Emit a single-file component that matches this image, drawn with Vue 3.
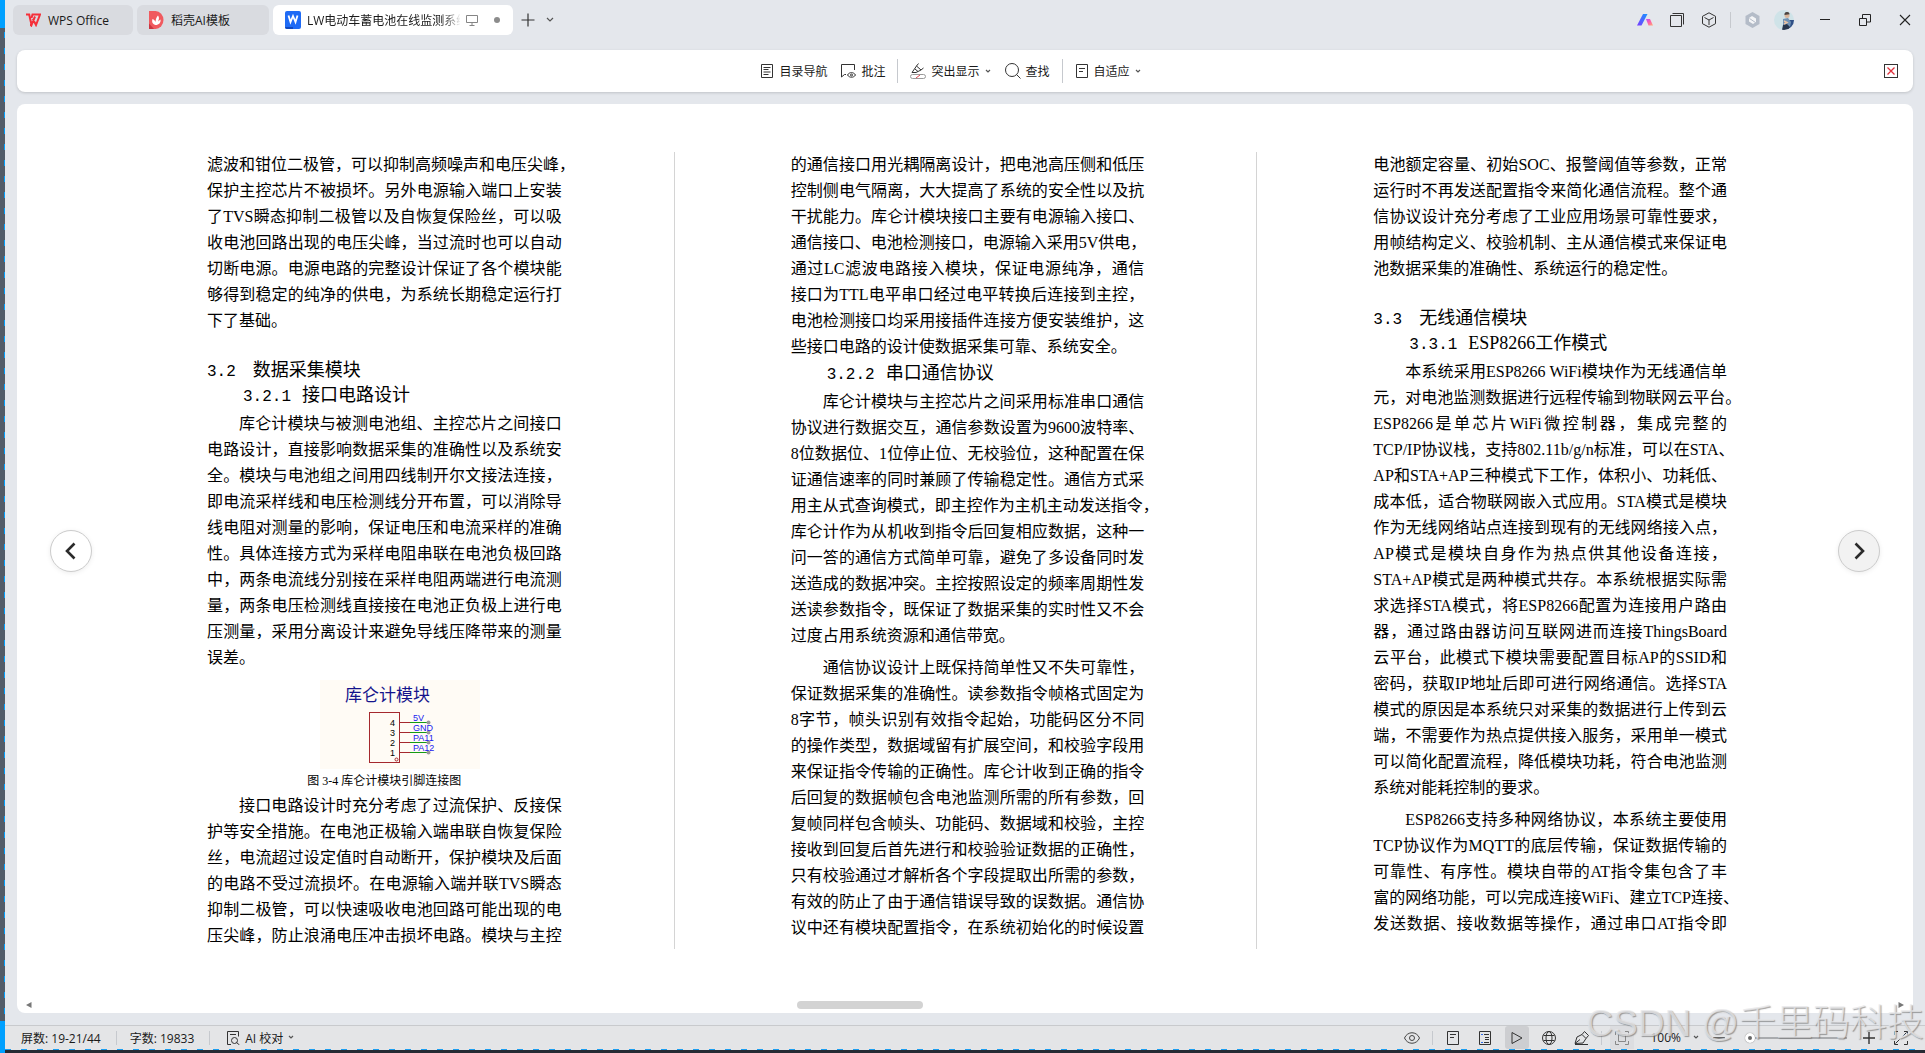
<template>
  <div class="desktop">
    <div class="edge"></div>
    <div class="window">
      <header class="titlebar">
        <nav class="tabs">
          <button class="tab tab-home">
            <svg width="16" height="14" viewBox="0 0 16 14" fill="none" stroke="#f5303a" stroke-width="2">
              <path d="M1 1.500h3.200L6.500 12 10 3.500M6.500 5l1-3.500H15L11 12 7.800 6M5 12h2M10.500 12h1.500" />
            </svg>
            <span>WPS Office</span>
          </button>
          <button class="tab tab-docer">
            <svg width="15" height="18" viewBox="0 0 15 18">
              <path d="M0 0h6.500a8 9 0 0 1 0 18H0z" fill="#f05a5f" />
              <path d="M0 12.500L5 18H0z" fill="#c93640" />
              <path d="M6.500 14C2.500 13 3 9.500 3.500 8c1.500.500 2.500 1.500 3 3 .200-3 1-5 2.500-6.500 1.500 2 1 4 0 6l2.500-2c.500 3-1.500 5.500-5 5.500z" fill="#fff" />
            </svg>
            <span>稻壳AI模板</span>
          </button>
          <button class="tab tab-doc">
            <svg width="16" height="18" viewBox="0 0 16 18">
              <rect width="16" height="18" rx="2" fill="#1f6bf5" />
              <path d="M0 16h8v2H2a2 2 0 0 1-2-2z" fill="#1148bd" />
              <path d="M3.500 4.500l2 6.500L8 5l2.500 6 2-6.500" fill="none" stroke="#fff" stroke-width="1.800" />
            </svg>
            <span class="tab-title">LW电动车蓄电池在线监测系统</span>
            <svg width="12" height="12" viewBox="0 0 12 12" fill="none" stroke="#858585">
              <path d="M.500 1.500h11v7H.500zM3.500 11.500h5M6 8.500v3" />
            </svg>
            <i class="unsaved"></i>
          </button>
          <button class="icon-btn" aria-label="新建">
            <svg width="14" height="14" viewBox="0 0 14 14" stroke="#333" stroke-width="1.200"><path d="M7 .500v13M.500 7h13" /></svg>
          </button>
          <button class="icon-btn list" aria-label="标签列表">
            <svg class="chev" width="8" height="6" viewBox="0 0 8 6"><path d="M1 1l3 3 3-3" /></svg>
          </button>
        </nav>
        <div class="window-tools">
          <button class="icon-btn w32" aria-label="WPS AI">
            <svg width="16" height="12" viewBox="0 0 16 12">
              <defs>
                <linearGradient id="aiLeft" x1="0" y1="1" x2="1" y2="0">
                  <stop offset="0" stop-color="#7a3cff" />
                  <stop offset="1" stop-color="#1894ff" />
                </linearGradient>
                <linearGradient id="aiRight" x1="0" y1="0" x2="1" y2="1">
                  <stop offset="0" stop-color="#b74bff" />
                  <stop offset=".500" stop-color="#ff5fa8" />
                  <stop offset="1" stop-color="#ffb070" />
                </linearGradient>
              </defs>
              <path d="M6 0h4.500L4.500 11.500H0z" fill="url(#aiLeft)" />
              <path d="M9 5h4l3 6.500h-4.500z" fill="url(#aiRight)" />
            </svg>
          </button>
          <button class="icon-btn w32" aria-label="工作区">
            <svg width="14" height="14" viewBox="0 0 14 14" fill="none" stroke="#333"><path d="M.500 2.500h11v11H.500zM2.500.500h11v11" /></svg>
          </button>
          <button class="icon-btn w32" aria-label="应用">
            <svg width="16" height="16" viewBox="0 0 16 16" fill="none" stroke="#333">
              <path d="M8 .800l6.500 3.500v7.400L8 15.200l-6.500-3.500V4.300zM3.500 5.500L8 8l4.500-2.500M8 8v5" />
            </svg>
          </button>
          <span class="vline"></span>
          <button class="icon-btn w32" aria-label="会员">
            <svg width="15" height="16" viewBox="0 0 15 16">
              <path d="M7.500 0L14.500 4v8l-7 4-7-4V4z" fill="#b4bcc8" />
              <path d="M4 6l3-2 4 2.500V10l-3 2-4-2.500z" fill="#f4f5f7" />
              <path d="M4.500 6.500l6 4" stroke="#b4bcc8" />
            </svg>
          </button>
          <button class="icon-btn w32" aria-label="账户">
            <svg width="20" height="20" viewBox="0 0 20 20">
              <defs><clipPath id="face"><circle cx="10" cy="10" r="10" /></clipPath></defs>
              <g clip-path="url(#face)">
                <rect width="20" height="20" fill="#cfe3e8" />
                <path d="M15 10h5v10h-6z" fill="#2f4f86" />
                <path d="M9 9l5-1 3 4-1 5-7 1z" fill="#6f93b5" />
                <path d="M8 20l1-5 4-1 3 3-2 3z" fill="#27374d" />
                <circle cx="13" cy="5.500" r="2.500" fill="#d9b79c" />
                <path d="M10.500 5a2.600 2.600 0 0 1 5.200-.800z" fill="#4b4440" />
                <path d="M10 11l3 1.500-3 1.500" fill="none" stroke="#e8c3a4" stroke-width="1.500" />
              </g>
            </svg>
          </button>
          <button class="icon-btn w40 min" aria-label="最小化">
            <svg width="10" height="2" viewBox="0 0 10 2"><path d="M0 .500h10" stroke="#222" /></svg>
          </button>
          <button class="icon-btn w40" aria-label="还原">
            <svg width="12" height="12" viewBox="0 0 12 12" fill="none" stroke="#222"><path d="M.500 4.500h7v7h-7zM3.500 4V.500h8v7.500H8" /></svg>
          </button>
          <button class="icon-btn w40" aria-label="关闭">
            <svg width="12" height="12" viewBox="0 0 12 12" stroke="#222" stroke-width="1.100"><path d="M1 1l10 10M11 1L1 11" /></svg>
          </button>
        </div>
      </header>

      <div class="toolbar">
        <div class="tools">
          <button class="tool">
            <svg width="14" height="14" viewBox="0 0 14 14" fill="none" stroke="#333"><path d="M1.500.500h11v13h-11zM3.500 3.500h7M3.500 5.500h5M3.500 8h7M3.500 10.500h5" /></svg>
            <span>目录导航</span>
          </button>
          <button class="tool">
            <svg width="15" height="14" viewBox="0 0 15 14" fill="none" stroke="#333">
              <path d="M5 10.500H3.500L.500 13V.500h13V6M6.500 11c1.800-3.200 6.200-3.200 8 0-1.800 3-6.200 3-8 0z" />
              <circle cx="10.500" cy="11" r="1" />
            </svg>
            <span>批注</span>
          </button>
          <span class="vline"></span>
          <button class="tool">
            <svg width="16" height="16" viewBox="0 0 16 16" fill="none" stroke="#333">
              <path d="M2 9.500L6.500 3l4.500 4-5 2.500zM6.500 3L8.500.500M11 7l2.500-2M5 6l3 2.500" />
              <rect x=".500" y="11.500" width="15" height="4" rx="2" stroke="#999" />
              <path d="M6 15l4-3" stroke="#e0444e" />
            </svg>
            <span>突出显示</span>
            <svg class="chev" width="6" height="5" viewBox="0 0 6 5"><path d="M1 1l2 2 2-2" /></svg>
          </button>
          <button class="tool">
            <svg width="16" height="16" viewBox="0 0 16 16" fill="none" stroke="#333"><circle cx="7" cy="7" r="6.500" /><path d="M11.500 11.500L15.500 15.500" /></svg>
            <span>查找</span>
          </button>
          <span class="vline"></span>
          <button class="tool">
            <svg width="14" height="14" viewBox="0 0 14 14" fill="none" stroke="#333"><path d="M1.500.500h11v13h-11zM4 4.500h6M4 7.500h4" /></svg>
            <span>自适应</span>
            <svg class="chev" width="6" height="5" viewBox="0 0 6 5"><path d="M1 1l2 2 2-2" /></svg>
          </button>
        </div>
        <button class="icon-btn exit" aria-label="退出阅读">
          <svg width="14" height="14" viewBox="0 0 14 14" fill="none"><rect x=".500" y=".500" width="13" height="13" stroke="#333" /><path d="M3.500 3.500l7 7M10.500 3.500l-7 7" stroke="#e0303c" stroke-width="1.300" /></svg>
        </button>
      </div>

      <main class="reader">
        <div class="pages">
          <article v-for="(page, p) in pages" :key="p" class="page">
            <template v-for="(block, b) in page" :key="b">
              <h2 v-if="block.type === 'h2'"><span class="num">{{ block.num }}</span>{{ block.text }}</h2>
              <h3 v-else-if="block.type === 'h3'"><span class="num">{{ block.num }}</span>{{ block.text }}</h3>
              <figure v-else-if="block.type === 'figure'">
                <svg class="schematic" width="160" height="89" viewBox="0 0 160 89">
                  <rect width="160" height="89" fill="#fffbf5" />
                  <text class="sch-title" x="25" y="21">库仑计模块</text>
                  <rect x="49.500" y="32.500" width="30" height="50" fill="none" stroke="#a5282e" />
                  <circle cx="76.500" cy="79.500" r="1.500" fill="none" stroke="#a5282e" />
                  <g v-for="(pin, i) in pins" :key="pin">
                    <path :d="`M80 ${42.5 + i * 10}h10`" stroke="#a5282e" />
                    <path :d="`M90 ${42.5 + i * 10}h19`" stroke="#159a15" />
                    <circle cx="108.500" :cy="42.5 + i * 10" r="2" fill="#999" />
                    <text class="sch-no" x="70" :y="46 + i * 10">{{ 4 - i }}</text>
                    <text class="sch-pin" x="93" :y="41 + i * 10">{{ pin }}</text>
                  </g>
                </svg>
                <figcaption>{{ block.text }}</figcaption>
              </figure>
              <p v-else :class="{ cont: block.cont, open: block.open }">
                <span v-for="(line, l) in block.lines" :key="l" class="line">{{ line }}</span>
              </p>
            </template>
          </article>
        </div>
        <button class="turn prev" aria-label="上一页">
          <svg width="12" height="18" viewBox="0 0 12 18"><path d="M9.500 1.500L2 9l7.500 7.500" /></svg>
        </button>
        <button class="turn next" aria-label="下一页">
          <svg width="12" height="18" viewBox="0 0 12 18"><path d="M2.500 1.500L10 9l-7.500 7.500" /></svg>
        </button>
        <div class="hscroll">
          <svg width="6" height="6" viewBox="0 0 6 6"><path d="M5.500 0v6L0 3z" fill="#777" /></svg>
          <span class="thumb"></span>
          <svg width="6" height="6" viewBox="0 0 6 6"><path d="M.500 0v6L6 3z" fill="#777" /></svg>
        </div>
      </main>

      <footer class="status">
        <span class="stat">屏数: 19-21/44</span>
        <span class="vline"></span>
        <span class="stat">字数: 19833</span>
        <span class="vline"></span>
        <button class="tool proof">
          <svg width="14" height="14" viewBox="0 0 14 14" fill="none" stroke="#333">
            <path d="M5 13.500H1.500V.500h11v5M4 3.500h6" /><circle cx="8.500" cy="9.500" r="3" /><path d="M10.500 11.500l3 2.500" />
          </svg>
          <span>AI 校对</span>
          <svg class="chev" width="6" height="5" viewBox="0 0 6 5"><path d="M1 1l2 2 2-2" /></svg>
        </button>
        <div class="views">
          <button class="icon-btn w32" aria-label="护眼模式">
            <svg width="16" height="12" viewBox="0 0 16 12" fill="none" stroke="#444"><path d="M.500 6c3-7 12-7 15 0-3 7-12 7-15 0z" /><circle cx="8" cy="6" r="2.500" /></svg>
          </button>
          <span class="vline"></span>
          <button class="icon-btn w32" aria-label="页面视图">
            <svg width="14" height="14" viewBox="0 0 14 14" fill="none" stroke="#333"><path d="M1.500.500h11v13h-11zM4 3.500h6M4 6.500h4" /></svg>
          </button>
          <button class="icon-btn w32" aria-label="大纲视图">
            <svg width="14" height="14" viewBox="0 0 14 14" fill="none" stroke="#333"><path d="M1.500.500h11v13h-11zM6 3.500h5M7 6.500h4M7 8.500h4M6 11.500h5" /><path d="M3 3.500h2M3 11.500h2" stroke="#2f6bea" /></svg>
          </button>
          <button class="icon-btn active" aria-label="阅读视图">
            <svg width="12" height="14" viewBox="0 0 12 14" fill="none" stroke="#333"><path d="M1 1.500L11 7 1 12.500z" /></svg>
          </button>
          <button class="icon-btn w32" aria-label="Web视图">
            <svg width="14" height="14" viewBox="0 0 14 14" fill="none" stroke="#333"><circle cx="7" cy="7" r="6.500" /><ellipse cx="7" cy="7" rx="3" ry="6.500" /><path d="M1.500 4.500h11M1.500 9.500h11" /></svg>
          </button>
          <button class="icon-btn w32" aria-label="写作模式">
            <svg width="15" height="14" viewBox="0 0 15 14" fill="none" stroke="#333"><path d="M1 12.500L3 6l5-2.500 4 4L9 12zM8 3.500L10.500.500l4 4L12 7.500M1 12.500l5-4M1 13.500h13" /></svg>
          </button>
          <span class="vline"></span>
          <button class="icon-btn fit" aria-label="适合页面">
            <svg width="14" height="14" viewBox="0 0 14 14" fill="none" stroke="#888"><path d="M.500 4V.500H4M10 .500h3.500V4M13.500 10v3.500H10M4 13.500H.500V10M3.500 3.500h7v7h-7z" /></svg>
          </button>
          <button class="tool zoom-value">
            <span>100%</span>
            <svg class="chev" width="6" height="5" viewBox="0 0 6 5"><path d="M1 1l2 2 2-2" /></svg>
          </button>
          <button class="icon-btn w40" aria-label="缩小">
            <svg width="12" height="2" viewBox="0 0 12 2"><path d="M0 1h12" stroke="#666" stroke-width="2" /></svg>
          </button>
          <input v-model="zoom" class="slider" type="range" min="100" max="500" aria-label="缩放" />
          <button class="icon-btn w32" aria-label="放大">
            <svg width="12" height="12" viewBox="0 0 12 12"><path d="M6 0v12M0 6h12" stroke="#333" stroke-width="1.400" /></svg>
          </button>
          <button class="icon-btn w32" aria-label="全屏">
            <svg width="14" height="14" viewBox="0 0 14 14" fill="none" stroke="#333"><path d="M.500 4V.500H4M10 .500h3.500V4M13.500 10v3.500H10M4 13.500H.500V10M8.500 5.500l4-4M5.500 8.500l-4 4" /></svg>
          </button>
        </div>
      </footer>
      <div class="taskline"></div>
    </div>
    <div class="watermark">CSDN @千里码科技</div>
  </div>
</template>

<script setup>
import { ref } from 'vue'

const zoom = ref(100)
const pins = ['5V', 'GND', 'PA11', 'PA12']

// cont: continues from the previous page, open: runs on to the next page
const pages = [
  [
    {
      type: 'p',
      cont: true,
      lines: [
        '滤波和钳位二极管，可以抑制高频噪声和电压尖峰，',
        '保护主控芯片不被损坏。另外电源输入端口上安装',
        '了TVS瞬态抑制二极管以及自恢复保险丝，可以吸',
        '收电池回路出现的电压尖峰，当过流时也可以自动',
        '切断电源。电源电路的完整设计保证了各个模块能',
        '够得到稳定的纯净的供电，为系统长期稳定运行打',
        '下了基础。'
      ]
    },
    { type: 'h2', num: '3.2', text: '数据采集模块' },
    { type: 'h3', num: '3.2.1', text: '接口电路设计' },
    {
      type: 'p',
      lines: [
        '库仑计模块与被测电池组、主控芯片之间接口',
        '电路设计，直接影响数据采集的准确性以及系统安',
        '全。模块与电池组之间用四线制开尔文接法连接，',
        '即电流采样线和电压检测线分开布置，可以消除导',
        '线电阻对测量的影响，保证电压和电流采样的准确',
        '性。具体连接方式为采样电阻串联在电池负极回路',
        '中，两条电流线分别接在采样电阻两端进行电流测',
        '量，两条电压检测线直接接在电池正负极上进行电',
        '压测量，采用分离设计来避免导线压降带来的测量',
        '误差。'
      ]
    },
    { type: 'figure', text: '图 3-4 库仑计模块引脚连接图' },
    {
      type: 'p',
      open: true,
      lines: [
        '接口电路设计时充分考虑了过流保护、反接保',
        '护等安全措施。在电池正极输入端串联自恢复保险',
        '丝，电流超过设定值时自动断开，保护模块及后面',
        '的电路不受过流损坏。在电源输入端并联TVS瞬态',
        '抑制二极管，可以快速吸收电池回路可能出现的电',
        '压尖峰，防止浪涌电压冲击损坏电路。模块与主控'
      ]
    }
  ],
  [
    {
      type: 'p',
      cont: true,
      lines: [
        '的通信接口用光耦隔离设计，把电池高压侧和低压',
        '控制侧电气隔离，大大提高了系统的安全性以及抗',
        '干扰能力。库仑计模块接口主要有电源输入接口、',
        '通信接口、电池检测接口，电源输入采用5V供电，',
        '通过LC滤波电路接入模块，保证电源纯净，通信',
        '接口为TTL电平串口经过电平转换后连接到主控，',
        '电池检测接口均采用接插件连接方便安装维护，这',
        '些接口电路的设计使数据采集可靠、系统安全。'
      ]
    },
    { type: 'h3', num: '3.2.2', text: '串口通信协议' },
    {
      type: 'p',
      lines: [
        '库仑计模块与主控芯片之间采用标准串口通信',
        '协议进行数据交互，通信参数设置为9600波特率、',
        '8位数据位、1位停止位、无校验位，这种配置在保',
        '证通信速率的同时兼顾了传输稳定性。通信方式采',
        '用主从式查询模式，即主控作为主机主动发送指令，',
        '库仑计作为从机收到指令后回复相应数据，这种一',
        '问一答的通信方式简单可靠，避免了多设备同时发',
        '送造成的数据冲突。主控按照设定的频率周期性发',
        '送读参数指令，既保证了数据采集的实时性又不会',
        '过度占用系统资源和通信带宽。'
      ]
    },
    {
      type: 'p',
      open: true,
      lines: [
        '通信协议设计上既保持简单性又不失可靠性，',
        '保证数据采集的准确性。读参数指令帧格式固定为',
        '8字节，帧头识别有效指令起始，功能码区分不同',
        '的操作类型，数据域留有扩展空间，和校验字段用',
        '来保证指令传输的正确性。库仑计收到正确的指令',
        '后回复的数据帧包含电池监测所需的所有参数，回',
        '复帧同样包含帧头、功能码、数据域和校验，主控',
        '接收到回复后首先进行和校验验证数据的正确性，',
        '只有校验通过才解析各个字段提取出所需的参数，',
        '有效的防止了由于通信错误导致的误数据。通信协',
        '议中还有模块配置指令，在系统初始化的时候设置'
      ]
    }
  ],
  [
    {
      type: 'p',
      cont: true,
      lines: [
        '电池额定容量、初始SOC、报警阈值等参数，正常',
        '运行时不再发送配置指令来简化通信流程。整个通',
        '信协议设计充分考虑了工业应用场景可靠性要求，',
        '用帧结构定义、校验机制、主从通信模式来保证电',
        '池数据采集的准确性、系统运行的稳定性。'
      ]
    },
    { type: 'h2', num: '3.3', text: '无线通信模块' },
    { type: 'h3', num: '3.3.1', text: 'ESP8266工作模式' },
    {
      type: 'p',
      lines: [
        '本系统采用ESP8266 WiFi模块作为无线通信单',
        '元，对电池监测数据进行远程传输到物联网云平台。',
        'ESP8266是单芯片WiFi微控制器，集成完整的',
        'TCP/IP协议栈，支持802.11b/g/n标准，可以在STA、',
        'AP和STA+AP三种模式下工作，体积小、功耗低、',
        '成本低，适合物联网嵌入式应用。STA模式是模块',
        '作为无线网络站点连接到现有的无线网络接入点，',
        'AP模式是模块自身作为热点供其他设备连接，',
        'STA+AP模式是两种模式共存。本系统根据实际需',
        '求选择STA模式，将ESP8266配置为连接用户路由',
        '器，通过路由器访问互联网进而连接ThingsBoard',
        '云平台，此模式下模块需要配置目标AP的SSID和',
        '密码，获取IP地址后即可进行网络通信。选择STA',
        '模式的原因是本系统只对采集的数据进行上传到云',
        '端，不需要作为热点提供接入服务，采用单一模式',
        '可以简化配置流程，降低模块功耗，符合电池监测',
        '系统对能耗控制的要求。'
      ]
    },
    {
      type: 'p',
      open: true,
      lines: [
        'ESP8266支持多种网络协议，本系统主要使用',
        'TCP协议作为MQTT的底层传输，保证数据传输的',
        '可靠性、有序性。模块自带的AT指令集包含了丰',
        '富的网络功能，可以完成连接WiFi、建立TCP连接、',
        '发送数据、接收数据等操作，通过串口AT指令即'
      ]
    }
  ]
]
</script>

<style>
body {
  margin: 0;
}
</style>

<style scoped>
.desktop {
  position: relative;
  display: flex;
  min-height: 100vh;
  overflow: hidden;
  background: #e4e7ec;
  color: #1a1a1a;
  font-family: "Open Sans", "Noto Sans CJK SC", sans-serif;
  font-size: 12px;
}

.desktop * {
  box-sizing: border-box;
}

svg {
  flex: none;
}

button {
  display: flex;
  align-items: center;
  padding: 0;
  border: none;
  background: none;
  color: inherit;
  font: inherit;
  white-space: nowrap;
  cursor: pointer;
}

.edge {
  flex: none;
  width: 5px;
  background:
    linear-gradient(#00a0ff, #00a0ff) 0 0 / 5px 28px no-repeat,
    linear-gradient(#00a0ff, #00a0ff) 0 100% / 5px 32px no-repeat,
    repeating-linear-gradient(#00a0ff 0 6px, #525c69 6px 16px) 100% 0 / 1px 100% no-repeat,
    #525c69;
}

.window {
  display: flex;
  flex: 1;
  flex-direction: column;
  min-width: 0;
}

.titlebar {
  display: flex;
  justify-content: space-between;
  height: 50px;
  padding: 5px 0 15px 8px;
}

.tabs,
.window-tools {
  display: flex;
  align-items: center;
  gap: 4px;
}

.window-tools {
  gap: 0;
}

.tab {
  gap: 7px;
  height: 30px;
  padding: 0 12px;
  border-radius: 6px;
  background: #d9dbe0;
}

.tab-home {
  width: 120px;
}

.tab-docer {
  width: 132px;
}

.tab-doc {
  gap: 6px;
  width: 240px;
  background: #fff;
}

.tab-title {
  width: 153px;
  overflow: hidden;
  text-align: left;
  mask-image: linear-gradient(90deg, #000 136px, transparent 154px);
}

.unsaved {
  width: 6px;
  height: 6px;
  margin-left: 10px;
  border-radius: 50%;
  background: #8c8c8c;
}

.icon-btn {
  justify-content: center;
  height: 24px;
}

.tabs .icon-btn {
  width: 22px;
}

.tabs .list {
  width: 14px;
}

.w32 {
  width: 32px;
}

.w40 {
  width: 40px;
}

.min {
  margin-left: 5px;
}

.chev {
  fill: none;
  stroke: #555;
  stroke-width: 1.2;
}

.vline {
  flex: none;
  width: 1px;
  height: 16px;
  margin: 0 5px;
  background: #c6c9ce;
}

.toolbar {
  display: flex;
  align-items: center;
  flex: none;
  height: 42px;
  margin: 0 12px 12px;
  padding-right: 15px;
  border-radius: 8px;
  background: #fff;
  box-shadow: 0 1px 3px rgba(0, 0, 0, 0.16);
}

.tools {
  display: flex;
  align-items: center;
  justify-content: center;
  flex: 1;
  gap: 14px;
}

.tools .vline {
  height: 24px;
  margin: 0 -2px;
}

.tool {
  gap: 5px;
}

.reader {
  position: relative;
  display: flex;
  flex-direction: column;
  flex: 1;
  margin: 0 12px 12px;
  border-radius: 8px;
  background: #fff;
}

.pages {
  display: grid;
  grid-template-columns: repeat(3, minmax(0, 1fr));
  align-items: start;
  flex: 1;
  padding: 48px 74px 0;
  color: #000;
  font-family: "Liberation Serif", "Noto Sans CJK SC", serif;
  font-size: 16px;
}

.page {
  min-height: 797px;
  padding: 0 112px 0 116px;
}

.page + .page {
  border-left: 1px solid #d4d4d4;
}

p {
  margin: 0;
}

p + p {
  margin-top: 6px;
}

.line {
  display: block;
  line-height: 26px;
  white-space: nowrap;
  text-align: justify;
  text-align-last: justify;
  text-spacing-trim: space-all;
}

p:not(.cont) .line:first-child {
  padding-left: 32px;
}

p:not(.open) .line:last-child {
  text-align-last: left;
}

h2,
h3 {
  margin: 24px 0 0;
  font-size: 18px;
  font-weight: 400;
  line-height: 24px;
  white-space: nowrap;
}

h3 {
  margin: 1px 0 4px;
  padding-left: 36px;
}

.num {
  margin-right: 17px;
  font-family: "Liberation Mono", monospace;
  font-size: 16px;
  line-height: 1;
}

h3 .num {
  margin-right: 11px;
}

figure {
  margin: 9px 0 0;
  text-align: center;
}

.schematic {
  display: block;
  margin: 0 auto;
  padding-left: 32px;
  box-sizing: content-box;
}

.sch-title {
  fill: #14148c;
  font-family: "Noto Sans CJK SC", sans-serif;
  font-size: 17px;
}

.sch-no,
.sch-pin {
  font-family: "Liberation Sans", sans-serif;
  font-size: 9px;
}

.sch-pin {
  fill: #2020f0;
}

figcaption {
  font-size: 12px;
  line-height: 24px;
}

.turn {
  position: absolute;
  top: calc(50% - 8px);
  justify-content: center;
  width: 42px;
  height: 42px;
  border: 1px solid #ccc;
  border-radius: 50%;
  background: #fff;
  box-shadow: 0 1px 5px rgba(0, 0, 0, 0.08);
  transform: translateY(-50%);
}

.turn path {
  fill: none;
  stroke: #2b2b2b;
  stroke-width: 2.6;
}

.prev {
  left: 33px;
}

.next {
  right: 33px;
  background: #f2f2f2;
}

.hscroll {
  display: flex;
  align-items: center;
  justify-content: space-between;
  height: 16px;
  padding: 0 9px;
}

.thumb {
  width: 126px;
  height: 8px;
  margin-right: 210px;
  border-radius: 4px;
  background: #d3d3d3;
}

.status {
  display: flex;
  align-items: center;
  flex: none;
  height: 24px;
  padding: 0 8px 0 16px;
  border-top: 1px solid #c8cacd;
  background: #e4e5e7;
}

.status .vline {
  height: 14px;
  margin: 0 13px 0 15px;
}

.stat {
  white-space: nowrap;
}

.proof {
  margin-left: 3px;
}

.views {
  display: flex;
  align-items: center;
  margin-left: auto;
}

.views .vline {
  margin: 0 4px;
}

.status .icon-btn {
  height: 23px;
}

.active {
  width: 24px;
  margin: 0 4px;
  border-radius: 3px;
  background: #cdced1;
}

.fit {
  width: 24px;
  margin: 0 4px;
  background: #dcdde0;
}

.zoom-value {
  gap: 12px;
  padding-left: 12px;
}

.slider {
  width: 102px;
  height: 10px;
  margin: 0 6px;
  background: transparent;
  appearance: none;
}

.slider::-webkit-slider-runnable-track {
  height: 2px;
  background: #a9abae;
}

.slider::-webkit-slider-thumb {
  width: 10px;
  height: 10px;
  margin-top: -4px;
  border: 3px solid #fff;
  border-radius: 50%;
  background: #666;
  box-shadow: 0 0 1px #666;
  appearance: none;
}

.taskline {
  flex: none;
  height: 4px;
  background:
    repeating-linear-gradient(90deg, #1a9df0 0 6px, #e4e5e7 6px 16px) 0 0 / 100% 1px no-repeat,
    #262a33;
}

.watermark {
  position: absolute;
  right: 1px;
  bottom: 2px;
  color: rgba(232, 232, 234, 0.75);
  font-family: "Liberation Sans", "Noto Sans CJK SC", sans-serif;
  font-size: 37px;
  font-weight: 300;
  line-height: 54px;
  white-space: nowrap;
  text-shadow: 1px 1px 1px rgba(100, 100, 100, 0.6);
  pointer-events: none;
}
</style>
